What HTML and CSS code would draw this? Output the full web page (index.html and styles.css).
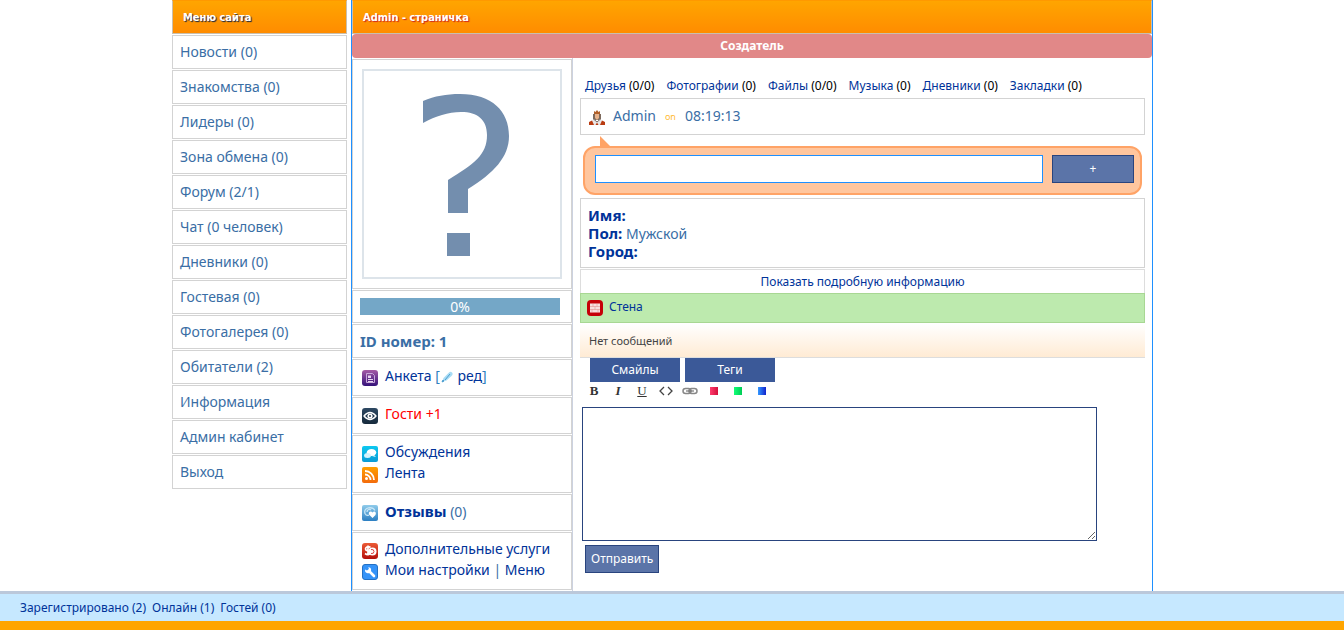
FILE: index.html
```html
<!DOCTYPE html>
<html lang="ru">
<head>
<meta charset="utf-8">
<title>Admin - страничка</title>
<link rel="stylesheet" href="styles.css">
</head>
<body>
<div class="page">
  <nav class="menu">
    <h2 class="bar">Меню сайта</h2>
    <a class="menu-item" href="#">Новости (0)</a>
    <a class="menu-item" href="#">Знакомства (0)</a>
    <a class="menu-item" href="#">Лидеры (0)</a>
    <a class="menu-item" href="#">Зона обмена (0)</a>
    <a class="menu-item" href="#">Форум (2/1)</a>
    <a class="menu-item" href="#">Чат (0 человек)</a>
    <a class="menu-item" href="#">Дневники (0)</a>
    <a class="menu-item" href="#">Гостевая (0)</a>
    <a class="menu-item" href="#">Фотогалерея (0)</a>
    <a class="menu-item" href="#">Обитатели (2)</a>
    <a class="menu-item" href="#">Информация</a>
    <a class="menu-item" href="#">Админ кабинет</a>
    <a class="menu-item" href="#">Выход</a>
  </nav>
  <main class="main">
    <h1 class="bar">Admin - страничка</h1>
    <div class="rank">Создатель</div>
    <div class="columns">
      <aside class="side">
        <div class="card photo-card">
          <svg class="photo" viewBox="0 0 200 210" role="img" aria-label="Нет фото">
            <rect x="1" y="1" width="198" height="208" fill="#fff" stroke="#dde4ea" stroke-width="2"/>
            <path d="M61 32 C73 27 84 25 98 25 C130 25 147 42 147 67 C147 88 132 104 106 120 V144 H86 V111 C112 95 125 86 125 66 C125 51 116 43 99 43 C86 43 74 47 61 54 Z" fill="#738eae"/>
            <rect x="85" y="164" width="23" height="23" fill="#738eae"/>
          </svg>
        </div>
        <div class="card"><div class="progress">0%</div></div>
        <div class="card"><b class="idnum">ID номер: 1</b></div>
        <div class="card links">
          <div class="row">
            <svg class="icon" viewBox="0 0 16 16"><defs><linearGradient id="pu" x2="0" y2="1"><stop stop-color="#a55ba5"/><stop offset="1" stop-color="#34127a"/></linearGradient></defs><rect width="16" height="16" rx="3" fill="url(#pu)"/><path d="M4.500 3.500h6l2 2v7h-8z" fill="none" stroke="#c9a9da"/><path d="M6 5.500h3v2.500h-3zM6 9h5v1h-5zM6 11h5v1h-5z" fill="#e6d4f0"/></svg>
            <span><a href="#">Анкета</a> <a class="edit" href="#">[<svg class="pen" viewBox="0 0 12 12"><path d="M1 11l1.500-4 5-5q2-2 3.500-.5t-.5 3.500l-5 4.500z" fill="#a8dcf5"/><path d="M1 11l1-2 1 1zM4 9l5-6" stroke="#4d9dce" fill="#4d9dce"/></svg> <span class="navy">ред</span>]</a></span>
          </div>
        </div>
        <div class="card links">
          <div class="row">
            <svg class="icon" viewBox="0 0 16 16"><defs><linearGradient id="ey" x2="0" y2="1"><stop stop-color="#2d4862"/><stop offset="1" stop-color="#162a3c"/></linearGradient></defs><rect width="16" height="16" rx="3" fill="url(#ey)"/><path d="M2 8q6-7 12 0q-6 7-12 0z" fill="none" stroke="#fff" stroke-width="1.300"/><circle cx="8" cy="8" r="2.600" fill="#fff"/><circle cx="8" cy="8" r="1" fill="#26384a"/></svg>
            <a class="red" href="#">Гости +1</a>
          </div>
        </div>
        <div class="card links">
          <div class="row">
            <svg class="icon" viewBox="0 0 16 16"><defs><linearGradient id="ch" x2="0" y2="1"><stop stop-color="#0cc8f0"/><stop offset="1" stop-color="#0a9bd6"/></linearGradient></defs><rect width="16" height="16" rx="2" fill="url(#ch)"/><ellipse cx="9.500" cy="6.500" rx="4.800" ry="3.500" fill="#fff"/><path d="M12 9l2 2-4-1z" fill="#fff"/><ellipse cx="5.500" cy="9.500" rx="3.500" ry="2.500" fill="#d5f3fd"/></svg>
            <a href="#">Обсуждения</a>
          </div>
          <div class="row">
            <svg class="icon" viewBox="0 0 16 16"><defs><linearGradient id="rs" x2="0" y2="1"><stop stop-color="#ffa000"/><stop offset="1" stop-color="#f36b0c"/></linearGradient></defs><rect width="16" height="16" rx="2" fill="url(#rs)"/><circle cx="4.500" cy="11.500" r="1.500" fill="#fff"/><path d="M3 7.500a5.500 5.500 0 0 1 5.500 5.500M3 4a9 9 0 0 1 9 9" fill="none" stroke="#fff" stroke-width="1.800"/></svg>
            <a href="#">Лента</a>
          </div>
        </div>
        <div class="card links">
          <div class="row">
            <svg class="icon" viewBox="0 0 16 16"><defs><linearGradient id="rv" x2="0" y2="1"><stop stop-color="#8fcbea"/><stop offset="1" stop-color="#2c7fc2"/></linearGradient></defs><rect width="16" height="16" rx="2" fill="url(#rv)"/><path d="M3 8.500c-2-7 8-7 10-3M3 8.500c1 2 3 2 4 1.500M5 7c0-3 3-3 4-2" fill="none" stroke="#c7e6f7" stroke-width="1.300"/><path d="M10.500 13L7 9.500C6 7 9 5.500 10.500 7.500C12 5.500 15 7 13.500 10z" fill="#fff"/></svg>
            <span><a href="#"><b>Отзывы</b></a> (0)</span>
          </div>
        </div>
        <div class="card links">
          <div class="row">
            <svg class="icon" viewBox="0 0 16 16"><defs><linearGradient id="dl" x2="0" y2="1"><stop stop-color="#ec5a35"/><stop offset="1" stop-color="#b30f0c"/></linearGradient></defs><rect width="16" height="16" rx="3" fill="url(#dl)"/><circle cx="10.500" cy="8.500" r="4" fill="#fff"/><path d="M8.500 4.500c-3-2-5 0-5 1.500 0 2.500 4.500 1.500 4.500 4 0 2-3 2-5 .5M6 2.500v10" fill="none" stroke="#fff" stroke-width="1.700"/><path d="M9 6.500q3-.5 3 2t-3 2" fill="none" stroke="#d44"/></svg>
            <a href="#">Дополнительные услуги</a>
          </div>
          <div class="row">
            <svg class="icon" viewBox="0 0 16 16"><rect x=".5" y=".5" width="15" height="15" rx="2.500" fill="#3593f8" stroke="#2370c4"/><path d="M7 7l5 5" stroke="#fff" stroke-width="2.600" stroke-linecap="round"/><path d="M3.200 5.500a3 3 0 1 0 3-2.300L7 5 5 6.500z" fill="#fff"/></svg>
            <span><a href="#">Мои настройки</a> | <a href="#">Меню</a></span>
          </div>
        </div>
      </aside>
      <section class="content">
        <div class="counts">
          <span><a href="#">Друзья</a> (0/0)</span><span><a href="#">Фотографии</a> (0)</span><span><a href="#">Файлы</a> (0/0)</span><span><a href="#">Музыка</a> (0)</span><span><a href="#">Дневники</a> (0)</span><span><a href="#">Закладки</a> (0)</span>
        </div>
        <div class="card user">
          <svg class="king" viewBox="0 0 16 16"><path d="M5 4V1l1.500 1L8 0l1.500 2L11 1v3z" fill="#b0602a"/><path d="M4 4h8v6H4z" fill="#7d6a5c"/><path d="M6 4h4v4l-2 2-2-2z" fill="#e8b28a"/><path d="M1 15V12l4-3 3 3 3-3 4 3v3z" fill="#e9e6e6"/><path d="M0 15v-3l3-1.500 2 4.500zM16 15v-3l-3-1.500-2 4.500zM6.500 15L8 12.500 9.500 15z" fill="#b93c12"/><path d="M4.500 9L8 12l3.500-3" fill="none" stroke="#776c68"/></svg>
          <span>Admin</span><span class="on">on</span><span>08:19:13</span>
        </div>
        <form class="status">
          <input class="status-text" type="text" aria-label="Статус">
          <button class="btn status-add" type="button">+</button>
        </form>
        <div class="card info">
          <div><b>Имя:</b></div>
          <div><b>Пол:</b> Мужской</div>
          <div><b>Город:</b></div>
        </div>
        <a class="more" href="#">Показать подробную информацию</a>
        <div class="wall">
          <svg class="icon" viewBox="0 0 16 16"><rect width="16" height="16" rx="4" fill="#c60008"/><rect x="3" y="3.500" width="10" height="9" fill="#f8dede"/><path d="M3 6.500h10M3 9.500h10M6 3.500v3M10 3.500v3M8 6.500v3M5 9.500v3M11 9.500v3" stroke="#dc8585" stroke-width=".5"/></svg>
          <a href="#">Стена</a>
        </div>
        <div class="empty">Нет сообщений</div>
        <form class="message">
          <div class="tabs">
            <button class="tab" type="button">Смайлы</button>
            <button class="tab" type="button">Теги</button>
          </div>
          <div class="tools">
            <button class="tool bold" type="button">B</button>
            <button class="tool italic" type="button">I</button>
            <button class="tool under" type="button">U</button>
            <button class="tool" type="button" aria-label="Код"><svg viewBox="0 0 16 16"><path d="M6 4L2 8 6 12M10 4l4 4L10 12" fill="none" stroke="#444" stroke-width="1.300"/></svg></button>
            <button class="tool" type="button" aria-label="Ссылка"><svg viewBox="0 0 16 16"><rect x="1" y="5.500" width="8" height="5" rx="2.500" fill="none" stroke="#888" stroke-width="1.500"/><rect x="7" y="5.500" width="8" height="5" rx="2.500" fill="none" stroke="#888" stroke-width="1.500"/><path d="M4 8h8" stroke="#777" stroke-width="1.200"/></svg></button>
            <button class="tool" type="button" aria-label="Красный"><i class="swatch red-swatch"></i></button>
            <button class="tool" type="button" aria-label="Зелёный"><i class="swatch green-swatch"></i></button>
            <button class="tool" type="button" aria-label="Синий"><i class="swatch blue-swatch"></i></button>
          </div>
          <textarea class="text" aria-label="Сообщение"></textarea>
          <button class="btn send" type="button">Отправить</button>
        </form>
      </section>
    </div>
  </main>
</div>
<footer class="footer">
  <a href="#">Зарегистрировано (2)</a>
  <a href="#">Онлайн (1)</a>
  <a href="#">Гостей (0)</a>
</footer>
</body>
</html>
```
FILE: styles.css
```css
* { box-sizing: border-box; }

body {
  margin: 0;
  min-height: 100vh;
  display: flex;
  flex-direction: column;
  background: #fff;
  color: #3a6ea5;
  font: 14px/18px "Noto Sans", "Open Sans", sans-serif;
}

a { color: #039; text-decoration: none; }
b { font-size: 15px; font-weight: bold; }
button, input, textarea { font: inherit; margin: 0; }

.page {
  flex: 1;
  width: 100%;
  max-width: 1000px;
  margin: 0 auto;
  padding-right: 19px;
  display: flex;
  gap: 4px;
}

.bar {
  margin: 0;
  height: 34px;
  padding: 0 10px;
  border: 1px solid #c9bfae;
  border-top-color: #f90;
  background: linear-gradient(#ffa500, #ff8c00);
  color: #fff;
  font: bold 11px/33px "DejaVu Sans Condensed", "DejaVu Sans", sans-serif;
  text-shadow: 1px 1px 1px #c22;
}

.menu {
  width: 175px;
  display: flex;
  flex-direction: column;
  gap: 1px;
}
.menu .bar { text-shadow: 1px 1px 1px #124; }
.menu-item {
  padding: 7px;
  border: 1px solid #d3d3d3;
  color: #3a6ea5;
}

.main {
  flex: 1;
  border: solid #1e90ff;
  border-width: 0 1px;
}
.rank {
  border-radius: 4px;
  background: #e18888;
  color: #fff;
  font-size: 12px;
  font-weight: bold;
  line-height: 24px;
  text-align: center;
}
.columns { display: flex; }

.side {
  width: 221px;
  padding: 1px 0;
  border-right: 1px solid #ccd2e0;
  display: flex;
  flex-direction: column;
  gap: 1px;
}
.card {
  padding: 7px;
  border: 1px solid #d3d3d3;
}
.photo-card { padding: 9px; }
.photo { display: block; width: 200px; height: 210px; }
.progress {
  width: 200px;
  height: 17px;
  background: #74a7c7;
  color: #fff;
  line-height: 18px;
  text-align: center;
}
.idnum { display: block; }
.links { padding: 7px 9px; }
.row {
  height: 21px;
  display: flex;
  gap: 7px;
  white-space: nowrap;
}
.icon { width: 16px; height: 16px; flex: none; }
.row .icon { margin-top: 3px; }
.edit { color: #2f7fc0; }
.pen { width: 14px; height: 12px; vertical-align: -2px; }
.navy { color: #039; }
.red { color: #f00; }

.content {
  flex: 1;
  padding: 19px 7px 0;
}
.counts {
  display: flex;
  flex-wrap: wrap;
  gap: 12px;
  padding: 0 5px 3px;
  color: #000;
  font-size: 12px;
}
.user {
  display: flex;
  gap: 8px;
  height: 37px;
  padding: 8px;
}
.king { width: 16px; height: 16px; margin-top: 3px; }
.on { color: #fb3; font-size: 9px; padding: 1px; }

.status {
  position: relative;
  display: flex;
  gap: 9px;
  margin: 11px 3px 3px;
  padding: 7px 6px 10px 10px;
  border: 2px solid #ffa366;
  border-radius: 12px;
  background: #ffc69e;
}
.status::before {
  content: "";
  position: absolute;
  left: 15px;
  top: -12px;
  border: 5px solid transparent;
  border-left-color: #ffa366;
  border-bottom-color: #ffa366;
}
.status-text {
  flex: 1;
  min-width: 0;
  height: 28px;
  border: 1px solid #1e90ff;
  background: #fff;
}
.btn {
  height: 28px;
  padding: 0 5px;
  border: 1px solid #29447e;
  background: #5b74a8;
  color: #fff;
  font-size: 12px;
}
.status-add { width: 82px; }

.info b { color: #039; }
.info div { height: 18px; }
.more {
  display: block;
  margin-top: 1px;
  border: 1px solid #ddd;
  border-bottom: 0;
  font-size: 12px;
  line-height: 23px;
  text-align: center;
}
.wall {
  display: flex;
  gap: 6px;
  height: 30px;
  padding: 6px;
  border: 1px solid #a8d793;
  background: #bdeaae;
  font-size: 12px;
  line-height: 14px;
}
.empty {
  margin-top: 1px;
  padding: 8px 9px 7px;
  border-bottom: 1px solid #ddd;
  background: linear-gradient(#fff, #ffebd4);
  color: #444;
  font-size: 11px;
}
.tabs { display: flex; gap: 5px; padding-left: 10px; }
.tab {
  width: 90px;
  height: 24px;
  padding: 0;
  border: 0;
  background: #3b5998;
  color: #fff;
  font-size: 12px;
}
.tools { display: flex; gap: 8px; padding: 1px 6px 8px; }
.tool {
  width: 16px;
  height: 16px;
  padding: 0;
  border: 0;
  background: none;
  color: #333;
  font: 13px/16px "Liberation Serif", serif;
}
.tool svg { display: block; width: 16px; height: 16px; }
.bold { font-weight: bold; }
.italic { font-style: italic; font-weight: bold; }
.under { text-decoration: underline; }
.swatch { display: block; width: 8px; height: 8px; margin: 0 auto; }
.red-swatch { background: linear-gradient(90deg, #ff3d6e, #d4103c); }
.green-swatch { background: linear-gradient(90deg, #1f7, #0c5); }
.blue-swatch { background: linear-gradient(90deg, #39f, #12c); }
.text {
  display: block;
  width: 515px;
  max-width: 100%;
  height: 134px;
  margin: 0 2px 4px;
  border: 1px solid #29447e;
  background: #fff;
}
.send { margin-left: 5px; }

.footer {
  display: flex;
  gap: 6px;
  padding: 5px 20px 4px;
  border-top: 3px solid #bbc8da;
  border-bottom: 9px solid #ffa500;
  background: #c6e8ff;
  font-size: 12px;
}
```
